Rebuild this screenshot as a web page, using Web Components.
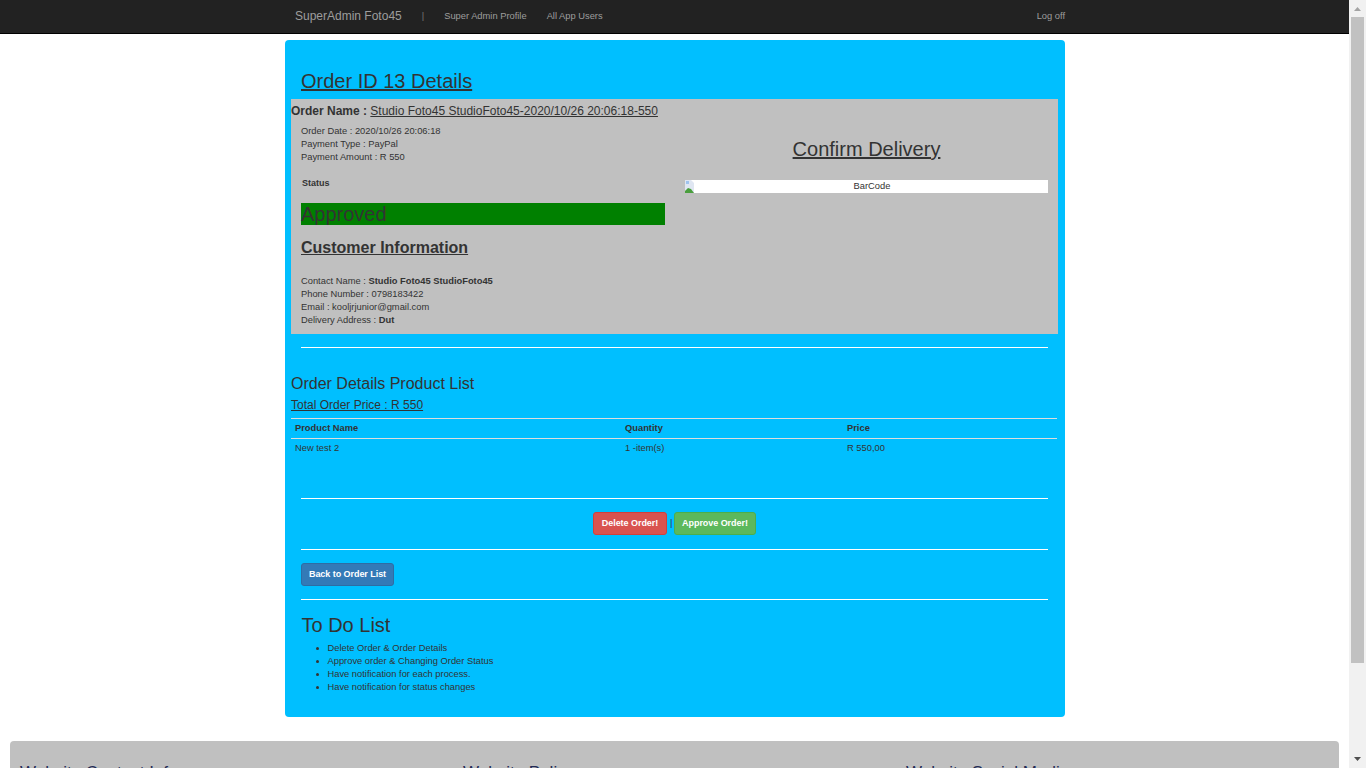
<!DOCTYPE html>
<html>
<head>
<meta charset="utf-8">
<title>Order Details</title>
<style>
html, body { margin: 0; height: 768px; overflow: hidden; background: #fff; }
body { font: 9.33px/13px "Liberation Sans", Arial, sans-serif; color: #333; }
</style>
</head>
<body>
<template id="nav-tpl">
<style>
:host { display: block; height: 33px; background: #222; border-bottom: 1px solid #000; color: #9d9d9d; }
.inner { width: 780px; margin-left: 285px; display: flex; align-items: center; height: 33px; padding-left: 10px; box-sizing: border-box; }
.brand { font-size: 12px; margin-right: 20px; }
.sep { margin-right: 20px; font-size: 9.33px; color: #777; }
a { color: #9d9d9d; font-size: 9.33px; margin-right: 20px; text-decoration: none; }
.off { margin-left: auto; margin-right: 0; }
</style>
<div class="inner">
    <span class="brand">SuperAdmin Foto45</span>
    <span class="sep">|</span>
    <a>Super Admin Profile</a>
    <a>All App Users</a>
    <a class="off">Log off</a>
</div>
</template>

<template id="card-tpl">
<style>
:host { display: block; width: 780px; margin: 6px 0 0 285px; background: #00bfff; border-radius: 4px; height: 677px; box-sizing: border-box; padding-top: 30px; }
h2 { font-size: 20px; line-height: 22px; font-weight: normal; text-decoration: underline; margin: 0 0 7px 16px; }
</style>
<h2>Order ID 13 Details</h2>
<slot></slot>
</template>

<template id="panel-tpl">
<style>
:host { display: block; margin: 0 7px 0 6px; background: #c0c0c0; height: 235px; }
.name { font-size: 12px; line-height: 17px; padding-top: 4px; }
.cols { display: grid; grid-template-columns: 364px 363px; column-gap: 20px; margin-left: 10px; }
.info { padding-top: 5px; }
.row { height: 13px; }
.status { font-weight: bold; font-size: 9px; margin: 13px 0 13px 1px; }
.approved { background: green; height: 22px; font-size: 20px; line-height: 22px; }
h3 { font-size: 16px; line-height: 18px; margin: 14px 0 18px; text-decoration: underline; }
.right { text-align: center; padding-top: 18px; }
.right h2 { font-size: 20px; line-height: 22px; font-weight: normal; text-decoration: underline; margin: 0 0 20px; }
.bar { position: relative; display: block; height: 13px; background: #fff; line-height: 13px; padding-left: 11px; }
.bar svg { position: absolute; left: 0; top: 0; }
</style>
<div class="name"><b>Order Name : </b><u>Studio Foto45 StudioFoto45-2020/10/26 20:06:18-550</u></div>
<div class="cols">
    <div class="info">
        <div class="row">Order Date : 2020/10/26 20:06:18</div>
        <div class="row">Payment Type : PayPal</div>
        <div class="row">Payment Amount : R 550</div>
        <div class="status">Status</div>
        <div class="approved">Approved</div>
        <h3>Customer Information</h3>
        <div class="row">Contact Name : <b>Studio Foto45 StudioFoto45</b></div>
        <div class="row">Phone Number : 0798183422</div>
        <div class="row">Email : kooljrjunior@gmail.com</div>
        <div class="row">Delivery Address : <b>Dut</b></div>
    </div>
    <div class="right">
        <h2>Confirm Delivery</h2>
        <span class="bar">
            <svg width="10" height="13" viewBox="0 0 10 13"><path d="M0 0h6l3 3v10H0z" fill="#dfe6f2"/><path d="M0 11l3-3 3 1 3 4H0z" fill="#4a9e3d"/><path d="M1 1h3v3H1z" fill="#9fc3ee"/></svg>
            BarCode
        </span>
    </div>
</div>
</template>

<template id="list-tpl">
<style>
:host { display: block; margin-left: 6px; width: 766px; }
h4 { font-size: 16px; line-height: 18px; font-weight: normal; margin: 27px 0 5px; }
.total { font-size: 12px; line-height: 14px; text-decoration: underline; margin-bottom: 6px; }
.grid { display: grid; grid-template-columns: 330px 222px 1fr; border-top: 1px solid #ddd; }
.grid div { padding: 3px 3px 3px 4px; line-height: 13px; height: 13px; }
.head { font-weight: bold; border-bottom: 1px solid #ddd; }
</style>
<h4>Order Details Product List</h4>
<div class="total">Total Order Price : R 550</div>
<div class="grid">
    <div class="head">Product Name</div><div class="head">Quantity</div><div class="head">Price</div>
    <div>New test 2</div><div>1 -item(s)</div><div>R 550,00</div>
</div>
</template>

<template id="line-tpl">
<style>
:host { display: block; height: 1px; background: #fff; margin-left: 16px; width: 747px; }
</style>
</template>

<template id="btn-tpl">
<style>
:host { display: inline-block; box-sizing: border-box; height: 23px; border: 1px solid; border-radius: 3px; color: #fff; font-size: 9px; font-weight: bold; letter-spacing: -0.05px; line-height: 21px; text-align: center; background: var(--bg); border-color: var(--bd); }
</style>
<slot></slot>
</template>

<template id="todo-tpl">
<style>
:host { display: block; margin-left: 16.500px; }
h3 { font-size: 20px; line-height: 22px; font-weight: normal; margin: 0 0 6px; }
ul { margin: 0; padding: 0 0 0 26px; line-height: 13px; }
</style>
<h3>To Do List</h3>
<ul>
    <li>Delete Order &amp; Order Details</li>
    <li>Approve order &amp; Changing Order Status</li>
    <li>Have notification for each process.</li>
    <li>Have notification for status changes</li>
</ul>
</template>

<template id="foot-tpl">
<style>
:host { display: grid; grid-template-columns: repeat(3, 443px); margin: 24px 0 0 10px; width: 1329px; box-sizing: border-box; height: 60px; padding: 22px 0 0 10px; background: #c0c0c0; border-radius: 4px; color: #222a55; font-size: 17px; line-height: 20px; }
</style>
<span>Website Contact Info</span>
<span>Website Policy</span>
<span>Website Social Media</span>
</template>

<template id="bar-tpl">
<style>
:host { display: block; position: fixed; right: 0; top: 0; width: 17px; height: 768px; background: #f1f1f1; }
.thumb { position: absolute; left: 2px; right: 2px; top: 17px; height: 646px; background: #c1c1c1; }
svg { position: absolute; left: 5px; }
</style>
<svg style="top:7px" width="7" height="4" viewBox="0 0 7 4"><path d="M3.500 0l3.500 4H0z" fill="#a3a3a3"/></svg>
<div class="thumb"></div>
<svg style="top:757px" width="7" height="4" viewBox="0 0 7 4"><path d="M0 0h7L3.500 4z" fill="#505050"/></svg>
</template>

<app-nav></app-nav>
<order-card>
    <order-panel></order-panel>
    <h-line style="margin-top:13px"></h-line>
    <product-list></product-list>
    <h-line style="margin-top:40px"></h-line>
    <div style="display:flex;align-items:flex-start;gap:3px;height:37px;padding:13px 0 0 308px">
        <app-btn style="--bg:#d9534f;--bd:#d43f3a;width:74px">Delete Order!</app-btn>
        <span style="line-height:23px;margin-right:-1.500px">|</span>
        <app-btn style="--bg:#5cb85c;--bd:#4cae4c;width:82px">Approve Order!</app-btn>
    </div>
    <h-line></h-line>
    <div style="margin:13px 0 13px 16px"><app-btn style="--bg:#337ab7;--bd:#2e6da4;width:93px;display:block">Back to Order List</app-btn></div>
    <h-line></h-line>
    <todo-list style="margin-top:14px"></todo-list>
</order-card>
<site-foot></site-foot>
<fake-scroll></fake-scroll>

<script>
function define(name, tpl) {
    customElements.define(name, class extends HTMLElement {
        constructor() {
            super();
            this.attachShadow({ mode: 'open' }).appendChild(document.getElementById(tpl).content.cloneNode(true));
        }
    });
}
define('app-nav', 'nav-tpl');
define('order-card', 'card-tpl');
define('order-panel', 'panel-tpl');
define('product-list', 'list-tpl');
define('h-line', 'line-tpl');
define('app-btn', 'btn-tpl');
define('todo-list', 'todo-tpl');
define('site-foot', 'foot-tpl');
define('fake-scroll', 'bar-tpl');
</script>
</body>
</html>
